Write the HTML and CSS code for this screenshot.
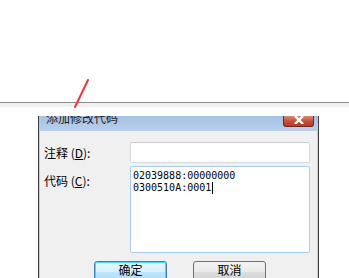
FILE: index.html
```html
<!DOCTYPE html>
<html lang="zh">
<head>
<meta charset="utf-8">
<link rel="stylesheet" href="styles.css">
</head>
<body>
<div class="page">
  <div class="top"></div>
  <div class="rule"></div>
  <div class="band"></div>
  <div class="gap"></div>
  <div class="dialog">
    <div class="titlebar">
      <span class="title">添加修改代码</span>
      <span class="close"><svg width="14" height="8" viewBox="0 0 14 8"><path d="M3 0 L11 8 M11 0 L3 8" stroke="#fff" stroke-width="2.4" fill="none"/></svg></span>
    </div>
    <div class="content">
      <div class="form">
        <label class="lbl lbl-note">注释 (<u>D</u>):</label>
        <div class="input"></div>
        <label class="lbl lbl-code">代码 (<u>C</u>):</label>
        <div class="area"><div class="line">02039888:00000000</div><div class="line">0300510A:0001<span class="caret"></span></div></div>
      </div>
      <div class="buttons">
        <button class="btn btn-ok">确定</button>
        <button class="btn">取消</button>
      </div>
    </div>
  </div>
  <svg class="arrow" width="20" height="32" viewBox="0 0 20 32"><path d="M17 2 L4 29" stroke="#f0343a" stroke-width="2" stroke-linecap="round" fill="none"/></svg>
</div>
</body>
</html>
```
FILE: styles.css
```css
html, body { margin: 0; padding: 0; background: #fff; }
body { width: 349px; height: 278px; overflow: hidden; font-family: "Noto Sans CJK SC", "Liberation Sans", sans-serif; font-size: 12px; color: #000; }
.page { position: relative; width: 349px; height: 278px; overflow: hidden; }
.top { height: 102px; background: #fff; }
.rule { height: 1px; background: #8c8c8c; }
.band { height: 4px; background: #f0f0f0; }
.gap { height: 9px; background: #fff; }
.dialog { margin-left: 38px; width: 277px; border-left: 1px solid #3c3c3c; border-right: 1px solid #3c3c3c; background: #b9d1ea; padding: 0 1px; }
.titlebar { height: 15px; overflow: hidden; display: flex; justify-content: space-between; align-items: flex-start; background: linear-gradient(#a6c2e2, #b8d0ea); margin: 0 -1px; padding: 0 4px 0 7px; }
.title { font-size: 12px; line-height: 12px; margin-top: -4px; color: #1a1a1a; }
.close { width: 29px; height: 10px; border: 1px solid #6e2a20; border-top: none; border-radius: 0 0 3px 3px; background: linear-gradient(#d98a76, #c5523d 50%, #b73a26); display: flex; align-items: center; justify-content: center; }
.close svg { display: block; margin-top: -2px; }
.content { background: #f0f0f0; padding: 11px 3px 0 4px; height: 160px; }
.form { display: grid; grid-template-columns: 86px 180px; row-gap: 3px; }
.lbl { font-size: 12px; line-height: 14px; white-space: nowrap; }
.lbl u { text-decoration: underline; }
.lbl-note { align-self: center; }
.lbl-code { padding-top: 8px; }
.input { height: 19px; background: #fff; border: 1px solid #d5d8dc; border-top-color: #c6c9cd; border-radius: 2px; }
.area { height: 81px; background: #fff; border: 1px solid #a9cbee; border-radius: 2px; padding: 3px 2px 1px; font-family: "DejaVu Sans Mono", "Liberation Mono", monospace; font-size: 10px; line-height: 12px; }
.line { white-space: pre; height: 12px; }
.caret { display: inline-block; width: 1px; height: 12px; background: #000; vertical-align: top; margin-left: 1px; }
.buttons { display: flex; gap: 26px; padding-left: 50px; margin-top: 8px; }
.btn { width: 73px; height: 23px; font-family: "Noto Sans CJK SC", sans-serif; font-size: 12px; line-height: 14px; padding: 1px 0 0; border: 1px solid #707070; border-radius: 3px; background: linear-gradient(#f2f2f2, #ebebeb 45%, #dddddd 50%, #cfcfcf); color: #000; display: flex; justify-content: center; align-items: flex-start; }
.btn-ok { border-color: #3c7fb1; box-shadow: inset 0 0 0 1px #48d8fb; background: linear-gradient(#eaf6fd, #d9f0fc 45%, #bee6fd 50%, #a7d9f5); }
.arrow { position: absolute; left: 71px; top: 78px; }
```
